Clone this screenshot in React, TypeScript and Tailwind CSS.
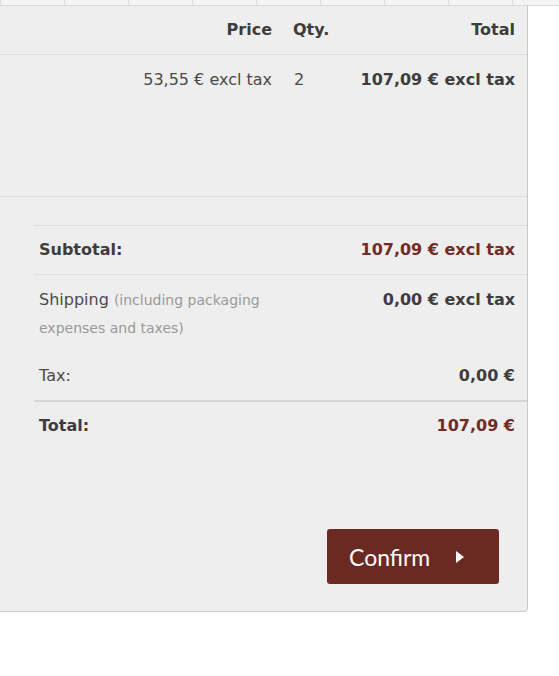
const body = { fontFamily: '"DejaVu Sans", Verdana, sans-serif' };

const Caret = () => (
  <svg width="8" height="12" viewBox="0 0 8 12" className="ml-[26px]">
    <polygon points="0,0 8,6 0,12" fill="#ffffff" />
  </svg>
);

const SummaryRow = ({
  label,
  value,
  strong,
  accent,
}: {
  label: React.ReactNode;
  value: string;
  strong?: boolean;
  accent?: boolean;
}) => (
  <div className="flex h-[48px] items-center pl-[5px] pr-[12px]">
    <span className={strong ? 'font-bold text-[#3d3d3d]' : 'text-[#4a4a4a]'}>{label}</span>
    <span className={`ml-auto font-bold ${accent ? 'text-[#722b25]' : 'text-[#3d3d3d]'}`}>{value}</span>
  </div>
);

export default function App() {
  return (
    <div className="min-h-screen bg-white text-[16px] leading-[24px]" style={body}>
      {/* top tab strip */}
      <div className="flex h-[6px] border-b border-[#d9d9d9] bg-[#f4f4f4]">
        <div className="w-[15px]" />
        {Array.from({ length: 9 }).map((_, i) => (
          <div key={i} className="w-[64px] shrink-0 border-l border-[#dcdcdc]" />
        ))}
      </div>

      <div className="w-[528px] rounded-br-[4px] border-r border-b border-[#c9c9c9] bg-[#eeeeee]">
        {/* table header */}
        <div className="flex h-[49px] items-center border-b border-[#dddddd] font-bold text-[#3d3d3d]">
          <div className="flex-1" />
          <div className="w-[140px] text-right">Price</div>
          <div className="w-[60px] pl-[21px]">Qty.</div>
          <div className="w-[195px] pr-[12px] text-right">Total</div>
        </div>

        {/* item row */}
        <div className="flex h-[142px] items-start border-b border-[#dddddd] pt-[13px] text-[#4a4a4a]">
          <div className="flex-1" />
          <div className="w-[140px] text-right">53,55 € excl tax</div>
          <div className="w-[60px] pl-[22px]">2</div>
          <div className="w-[195px] pr-[12px] text-right font-bold text-[#3d3d3d]">107,09 € excl tax</div>
        </div>

        {/* summary */}
        <div className="ml-[34px] mt-[28px] border-t border-[#dddddd]">
          <SummaryRow label="Subtotal:" value="107,09 € excl tax" strong accent />
          <div className="flex border-t border-[#dddddd] pt-[11px] pb-[10px] pl-[5px] pr-[12px] leading-[27px]">
            <div className="w-[236px] text-[#4a4a4a]">
              Shipping <span className="text-[14px] text-[#9a9a9a]">(including packaging expenses and taxes)</span>
            </div>
            <span className="ml-auto font-bold text-[#3d3d3d]">0,00 € excl tax</span>
          </div>
          <SummaryRow label="Tax:" value="0,00 €" />
          <div className="border-t-2 border-[#d6d6d6]">
            <SummaryRow label="Total:" value="107,09 €" strong accent />
          </div>
        </div>

        {/* confirm */}
        <div className="flex justify-end pb-[27px] pr-[28px] pt-[79px]">
          <button
            className="flex h-[55px] w-[172px] items-center rounded-[3px] bg-[#6b2924] pl-[22px] text-[23px] text-white"
            style={{ fontFamily: 'Lato, "Open Sans", sans-serif' }}
          >
            Confirm
            <Caret />
          </button>
        </div>
      </div>
    </div>
  );
}
